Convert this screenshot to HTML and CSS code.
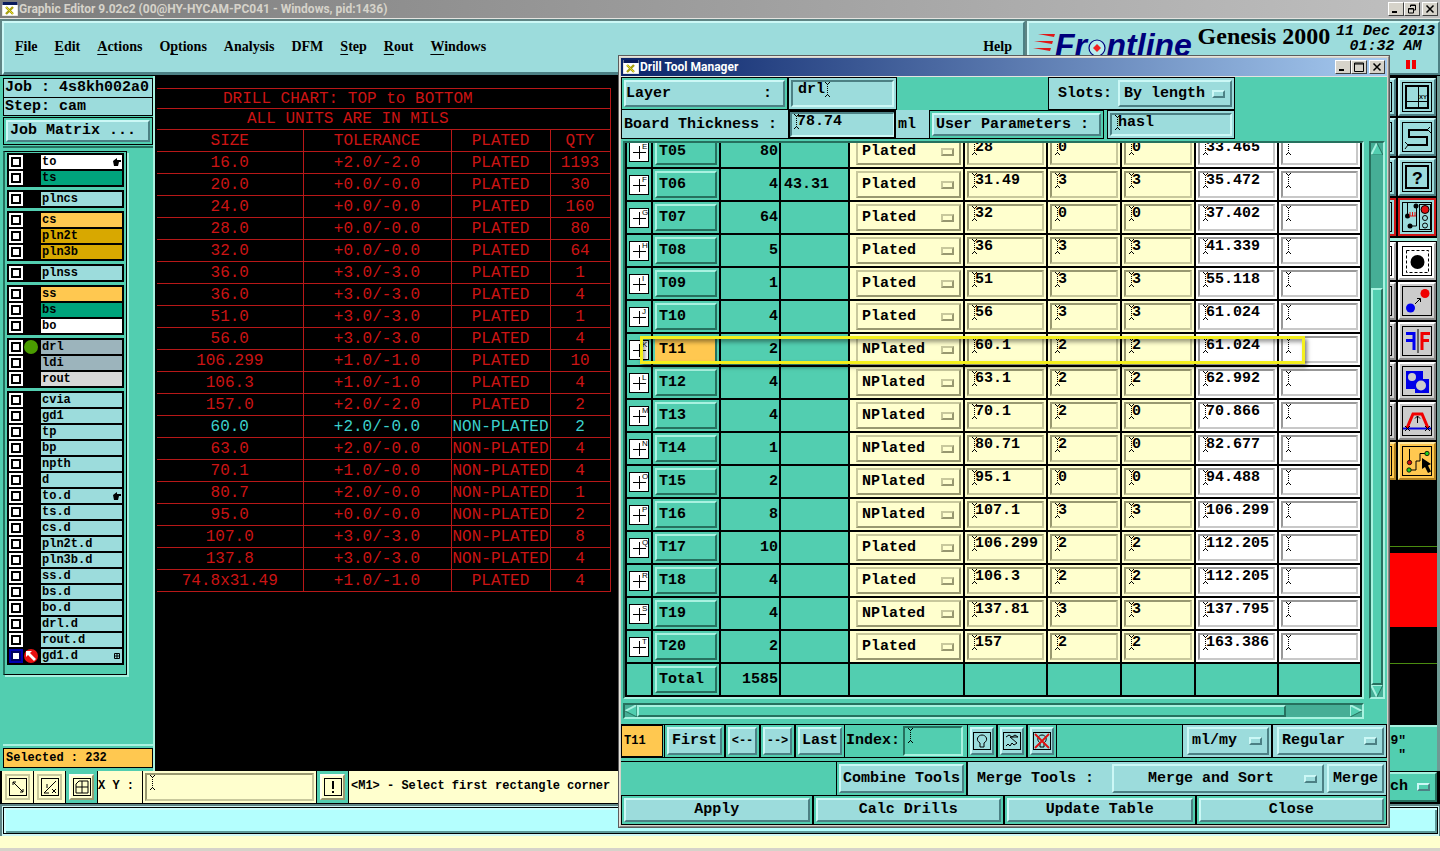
FILE: index.html
```html
<!DOCTYPE html>
<html lang="en">
<head>
<meta charset="utf-8">
<title>Graphic Editor</title>
<link rel="stylesheet" href="styles.css">
</head>
<body>
<svg class="defs" aria-hidden="true">
  <symbol id="app" viewBox="0 0 16 14"><rect width="16" height="14" fill="#fff"/><rect width="16" height="3" fill="#0a1a5c"/><path d="M0 0V14H16V0" fill="none" stroke="#cfcdc4"/><path d="M4 5l7 7M11 5l-7 7" stroke="#a8a010" stroke-width="2.4"/><path d="M4 5l7 7" stroke="#e8dc30"/></symbol>
  <symbol id="caret" viewBox="0 0 5 15"><path d="M0 .5h1M4 .5h1M1 1.5h1M3 1.5h1M0 14.5h1M4 14.5h1M1 13.5h1M3 13.5h1" stroke="#000"/><path d="M2.500 2v11" stroke="#000" stroke-dasharray="1 1"/></symbol>
  <symbol id="min" viewBox="0 0 10 10"><path d="M1 8h5" stroke="#000" stroke-width="2"/></symbol>
  <symbol id="max" viewBox="0 0 10 10"><path d="M.5 1h9v8.500h-9zM.5 2h9" fill="none" stroke="#000"/></symbol>
  <symbol id="restore" viewBox="0 0 10 10"><path d="M3.500 3V1h5v5H7M3.500 1.500h5M1.500 4.500h5v4.500h-5zM1.500 5h5" fill="none" stroke="#000"/></symbol>
  <symbol id="close" viewBox="0 0 10 10"><path d="M1.500 1.500l7 7M8.500 1.500l-7 7" stroke="#000" stroke-width="1.500"/></symbol>
</svg>

<div class="app">
  <header class="titlebar">
    <svg class="appicon"><use href="#app"/></svg>
    <span class="wtitle">Graphic Editor 9.02c2 (00@HY-HYCAM-PC041 - Windows, pid:1436)</span>
    <div class="winbtns">
      <button aria-label="Minimize"><svg><use href="#min"/></svg></button><button aria-label="Restore"><svg><use href="#restore"/></svg></button><button class="sep" aria-label="Close"><svg><use href="#close"/></svg></button>
    </div>
  </header>

  <div class="top">
    <nav class="menubar">
      <button><u>F</u>ile</button><button><u>E</u>dit</button><button><u>A</u>ctions</button><button>O<u>p</u>tions</button><button>Analysis</button><button>DFM</button><button><u>S</u>tep</button><button><u>R</u>out</button><button><u>W</u>indows</button><button class="help">Help</button>
    </nav>
    <div class="brand">
      <div class="logo">
        <svg class="streaks" viewBox="0 0 22 24"><path d="M5 0h17l-1 3zM1 7h19l-1 3zM0 14h18l-1 3z" fill="#e01818"/><path d="M3 21h13l-1 2z" fill="#e01818"/></svg>
        <span>Fr<span class="target">o<svg viewBox="0 0 20 20"><circle cx="10" cy="10" r="8" fill="#b8ecec" stroke="#00007c" stroke-width="1.200"/><path d="M10 6l4 4-4 4-4-4z" fill="#f02020"/></svg></span>ntline</span>
      </div>
      <div class="product">Genesis 2000</div>
      <div class="clock"><div>11 Dec 2013</div><div>01:32 AM</div><div class="pause"><i></i><i></i></div></div>
    </div>
  </div>

  <main class="work">
    <aside class="side">
      <div class="info">Job : 4s8kh002a0</div>
      <div class="info">Step: cam</div>
      <div class="slot"><button class="btn left">Job Matrix ...</button></div>
      <div class="layers"><div class="list" id="layers"></div></div>
      <div class="selected">Selected : 232</div>
    </aside>
    <section class="canvas">
      <table class="chart">
        <colgroup><col class="c1"><col class="c2"><col class="c3"><col class="c4"></colgroup>
        <thead>
          <tr class="t1"><td colspan="4">DRILL CHART: TOP to BOTTOM</td></tr>
          <tr class="t2"><td colspan="4">ALL UNITS ARE IN MILS</td></tr>
          <tr><th>SIZE</th><th>TOLERANCE</th><th>PLATED</th><th>QTY</th></tr>
        </thead>
        <tbody id="chart"></tbody>
      </table>
    </section>
    <aside class="right">
      <div class="tools">
        <div class="tile"></div>
        <button class="tile" aria-label="Coordinates"><svg viewBox="0 0 34 34"><rect x="6" y="6" width="22" height="22" class="k2"/><path d="M18.500 7v21M7 21.500h21" class="k1"/><text x="19" y="19" class="xy">XY</text></svg></button>
        <div class="tile"></div>
        <button class="tile" aria-label="Snake"><svg viewBox="0 0 34 34"><path d="M28 10H9v7h18v8H8" class="k2"/><path d="M27 10l3-3M28 10l3 3M8 25l-3-3M8 25l-3 4" class="k1"/></svg></button>
        <div class="tile"></div>
        <button class="tile" aria-label="Help"><svg viewBox="0 0 34 34"><rect x="6" y="6" width="22" height="22" class="k2"/><text x="12" y="24" class="q">?</text></svg></button>
        <div class="tile red"></div>
        <button class="tile red" aria-label="Select state"><svg viewBox="0 0 34 34"><path d="M7.500 3v13M16.500 7v19h-6" class="k1"/><circle cx="16" cy="6" r="2.500"/><circle cx="7.500" cy="16" r="2.500"/><circle cx="10" cy="26" r="2.500"/><path d="M10 12v4M12.500 12v4M15 12v4M9 16h7" stroke="#e01010"/><rect x="19.500" y="4.500" width="11" height="25" class="k1"/><circle cx="25" cy="9.500" r="4" fill="#e01010" stroke="#000"/><circle cx="25" cy="18" r="2.500" class="k1"/><circle cx="25" cy="25.500" r="2.500" class="k1"/></svg></button>
      </div>
      <div class="tools second">
        <div class="tile white"></div>
        <button class="tile white" aria-label="Pad"><svg viewBox="0 0 34 34"><rect x="6.500" y="6.500" width="22" height="22" class="k1" stroke-dasharray="3 2"/><circle cx="17.500" cy="18" r="7"/></svg></button>
        <div class="tile gray"></div>
        <button class="tile gray" aria-label="Move"><svg viewBox="0 0 34 34"><circle cx="10.500" cy="24" r="4.500" fill="#0000f0"/><circle cx="25" cy="9.500" r="4.500" fill="#f00000"/><path d="M15 20l5-5M17 14.500h3.500v3.500" class="k1"/></svg></button>
        <div class="tile gray"></div>
        <button class="tile gray" aria-label="Mirror"><svg viewBox="0 0 34 34"><path d="M6 9.500h8V26M6 16.500h8" fill="none" stroke="#0000f0" stroke-width="3"/><path d="M30 9.500h-8V26M29 16.500h-7" fill="none" stroke="#f00000" stroke-width="3"/><path d="M18 5v24" class="k1"/></svg></button>
        <div class="tile gray"></div>
        <button class="tile gray" aria-label="Copy shape"><svg viewBox="0 0 34 34"><path d="M6 7h17v8h6v14H15v-4H6z" fill="#0000e8"/><circle cx="12" cy="13" r="4" fill="#ccc"/><circle cx="21" cy="21.500" r="5" fill="#ccc"/></svg></button>
        <div class="tile gray"></div>
        <button class="tile gray" aria-label="Stretch"><svg viewBox="0 0 34 34"><path d="M3 24.500h28" stroke="#0000e0" stroke-width="2"/><path d="M7 24l6-14h9l6 14" fill="none" stroke="#f00000" stroke-width="3"/><path d="M17.500 19v-7M15 14.500l2.500-2.500 2.500 2.500M5 22l5 5M10 22l-5 5M25 22l5 5M30 22l-5 5" class="k1"/></svg></button>
        <div class="tile orange"></div>
        <button class="tile orange" aria-label="Route net"><svg viewBox="0 0 34 34"><path d="M9.500 5v14M9 26h7v-9h4V9.500h7" class="k1"/><circle cx="9.500" cy="18.500" r="2.200" fill="#d01010" stroke="#000" stroke-width=".8"/><circle cx="9" cy="26" r="2.200" fill="#20d020" stroke="#000" stroke-width=".8"/><circle cx="27" cy="9.500" r="2.200" fill="#20d020" stroke="#000" stroke-width=".8"/><path d="M22 14l9 6-3 1.500 3 6-3 1.500-3-6-3 2z"/></svg></button>
      </div>
      <div class="minimap"><div class="redblock"></div></div>
      <div class="coords"><div>9"</div><div>"</div></div>
    </aside>
  </main>

  <div class="status">
    <div class="cell flat"><button class="ic" aria-label="Zoom line"><svg viewBox="0 0 18 18"><rect x=".5" y=".5" width="17" height="17" class="k1"/><path d="M4 4l10 10M4 7V4h3M11 14h3v-3" class="k1"/></svg></button></div>
    <div class="cell flat"><button class="ic" aria-label="Angle"><svg viewBox="0 0 18 18"><rect x=".5" y=".5" width="17" height="17" class="k1"/><path d="M15 3L3 15M3 15h5M6 6v4M11 11l4 4M15 11l-4 4" class="k1"/></svg></button></div>
    <div class="cell"><button class="ic" aria-label="Grid"><svg viewBox="0 0 18 18"><rect x=".5" y=".5" width="17" height="17" class="k1"/><path d="M3 6l3-3h9v12H3zM9 3v12M3 9h12" class="k1"/></svg></button></div>
    <label class="xylabel" for="xy">X Y :</label>
    <div class="cell flat xybox"><div class="fld"><svg class="caret"><use href="#caret"/></svg><input id="xy"></div></div>
    <div class="cell"><button class="ic" aria-label="Alert"><svg viewBox="0 0 18 18"><rect x=".5" y=".5" width="17" height="17" class="k1"/><path d="M9 3v8M9 13v2" class="k2"/></svg></button></div>
    <div class="prompt">&lt;M1&gt; - Select first rectangle corner</div>
    <label class="unit"><span class="opt up"><select aria-label="Units"><option>Inch</option></select><i class="bar"></i></span></label>
  </div>
  <div class="message"><div></div></div>
  <div class="foot"></div>
</div>

<section class="dialog" aria-label="Drill Tool Manager">
  <header class="titlebar">
    <svg class="appicon"><use href="#app"/></svg>
    <span class="wtitle">Drill Tool Manager</span>
    <div class="winbtns">
      <button aria-label="Minimize"><svg><use href="#min"/></svg></button><button aria-label="Maximize"><svg><use href="#max"/></svg></button><button class="sep" aria-label="Close"><svg><use href="#close"/></svg></button>
    </div>
  </header>
  <div class="client">
    <div class="row r1">
      <div class="slot w166"><button class="btn spread"><span>Layer</span><span>:</span></button></div>
      <div class="slot aqua w108"><div class="fld aqua"><input class="indent" aria-label="Layer" value="drl" size="3"><svg class="caret"><use href="#caret"/></svg></div></div>
      <div class="push150"></div>
      <div class="slot aqua w187"><label for="slots">Slots:</label><span class="opt up"><select id="slots"><option>By length</option></select><i class="bar"></i></span></div>
    </div>
    <div class="row r2">
      <label class="blabel w166" for="bt">Board Thickness :</label>
      <div class="fld aqua focus"><svg class="caret"><use href="#caret"/></svg><input id="bt" value="78.74"></div>
      <span class="ml">ml</span>
      <div class="slot w174"><button class="btn left">User Parameters :</button></div>
      <div class="gap3"></div>
      <div class="slot aqua w128"><div class="fld aqua"><svg class="caret"><use href="#caret"/></svg><input aria-label="User parameters" value="hasl"></div></div>
    </div>

    <div class="scroller">
      <div class="view">
        <table class="drills">
          <colgroup><col class="d0"><col class="d1"><col class="d2"><col class="d3"><col class="d4"><col class="d5"><col class="d6"><col class="d6"><col class="d5"><col class="d5"></colgroup>
          <tbody id="drills"></tbody>
        </table>
        <div class="mark"></div>
      </div>
      <div class="vbar"><svg viewBox="0 0 12 12"><path d="M0 12L6 0l6 12z" fill="#52ceb0"/><path d="M0 12L6 0" stroke="#a8f2e0" stroke-width="2"/><path d="M6 0l6 12H0" fill="none" stroke="#26705e"/></svg><div class="trough"><div class="thumb"></div></div><svg viewBox="0 0 12 12"><path d="M0 0h12L6 12z" fill="#52ceb0"/><path d="M12 0H0l6 12" fill="none" stroke="#a8f2e0" stroke-width="2"/><path d="M6 12l6-12" stroke="#26705e"/></svg></div>
      <div class="hbar"><svg viewBox="0 0 12 12"><path d="M12 0L0 6l12 6z" fill="#52ceb0"/><path d="M12 0L0 6" stroke="#a8f2e0" stroke-width="2"/><path d="M0 6l12 6V0" fill="none" stroke="#26705e"/></svg><div class="trough"><div class="thumb"></div></div><svg viewBox="0 0 12 12"><path d="M0 0l12 6-12 6z" fill="#52ceb0"/><path d="M12 6L0 0v12" fill="none" stroke="#a8f2e0" stroke-width="2"/><path d="M0 12l12-6" stroke="#26705e"/></svg></div>
    </div>

    <div class="row r3">
      <div class="slot cur">T11</div>
      <div class="slot w60"><button class="btn">First</button></div>
      <div class="slot w36"><button class="btn small">&lt;--</button></div>
      <div class="slot w36"><button class="btn small">--&gt;</button></div>
      <div class="slot w50"><button class="btn">Last</button></div>
      <label class="idx" for="idx">Index:</label>
      <div class="fld teal"><svg class="caret"><use href="#caret"/></svg><input id="idx"></div>
      <div class="slot w30"><button class="btn" aria-label="Highlight"><svg viewBox="0 0 18 18"><rect x=".5" y=".5" width="17" height="17" class="k1"/><path d="M7 11c-5-3-2-8 2-8s7 5 2 8v4H7z" class="k1"/></svg></button></div>
      <div class="slot w30"><button class="btn" aria-label="Rout"><svg viewBox="0 0 18 18"><rect x=".5" y=".5" width="17" height="17" class="k1"/><path d="M3 5l3-2 3 2 3-2 3 2H7l7 6-3 2-2-2-2 3-2-2-2 2" class="k1"/></svg></button></div>
      <div class="slot w30"><button class="btn" aria-label="Clear"><svg viewBox="0 0 18 18"><rect x=".5" y=".5" width="17" height="17" class="k1"/><path d="M7 11c-4-3-2-8 2-8s6 5 2 8v4H7z" class="k1"/><path d="M2 2l14 14M16 2L2 16" stroke="#e01010" stroke-width="1.800"/></svg></button></div>
      <div class="grow"></div>
      <div class="slot aqua w90 inset"><span class="opt up"><select aria-label="Unit"><option>ml/my</option></select><i class="bar"></i></span></div>
      <div class="slot aqua w114 inset"><span class="opt up"><select aria-label="View"><option>Regular</option></select><i class="bar"></i></span></div>
    </div>
    <div class="row r4">
      <div class="grow"></div>
      <div class="slot w130"><button class="btn">Combine Tools</button></div>
      <div class="slot aqua merge"><label for="mt">Merge Tools :</label><span class="opt up center"><select id="mt"><option>Merge and Sort</option></select><i class="bar"></i></span><button class="btn">Merge</button></div>
    </div>
    <div class="row r5">
      <div class="slot"><button class="btn">Apply</button></div>
      <div class="slot"><button class="btn">Calc Drills</button></div>
      <div class="slot"><button class="btn">Update Table</button></div>
      <div class="slot"><button class="btn">Close</button></div>
    </div>
  </div>
</section>
<script src="app.js"></script>
</body>
</html>
```
FILE: styles.css
```css
:root {
  --teal: #52ceb0;
  --teal-hi: #a8f2e0;
  --teal-lo: #26705e;
  --aqua: #9cdcdc;
  --aqua-hi: #ccf8f6;
  --aqua-lo: #4c8084;
  --cream: #ffffce;
  --cream-hi: #c8c89c;
  --cream-lo: #989870;
  --orange: #ffc850;
  --frame: #d6d3ca;
  --mono: "Liberation Mono", "Courier New", monospace;
}
* { box-sizing: border-box; }
body { margin: 0; background: #000; color: #000; font: bold 15px/18px var(--mono); overflow: hidden; }
.defs { position: absolute; width: 0; height: 0; }
button, input, select { font: inherit; color: inherit; margin: 0; padding: 0; border: 0; background: none; border-radius: 0; }
select { appearance: none; min-width: 0; outline: 0; }
input { outline: 0; min-width: 0; }
svg { display: block; flex: none; }
.k1 { fill: none; stroke: #000; stroke-width: 1; }
.k2 { fill: none; stroke: #000; stroke-width: 2; }
.grow { flex: 1; }

.app { display: grid; grid-template-rows: 19px 57px 1fr 33px 32px 15px; min-height: 100vh; }

/* window title bars */
.titlebar { display: flex; align-items: center; background: linear-gradient(90deg, #7c7c7c, #c0c0c0); color: #d6d3ca; font: bold 12px/18px Roboto, sans-serif; border-bottom: 1px solid #e4e4e0; }
.appicon { width: 16px; height: 14px; margin: 0 1px 0 2px; }
.wtitle { flex: 1; white-space: nowrap; }
.winbtns { display: flex; padding-right: 2px; }
.winbtns button { width: 16px; height: 14px; background: var(--frame); border: 1px solid; border-color: #fff #404040 #404040 #fff; display: flex; align-items: center; justify-content: center; }
.winbtns svg { width: 10px; height: 10px; }
.winbtns .sep { margin-left: 2px; }

/* menu and brand */
.top { display: flex; gap: 2px; background: #5f8484; padding: 2px 0 0 2px; border-bottom: 1px solid #000; min-width: 0; }
.menubar { flex: 1; display: flex; align-items: center; background: var(--aqua); border: 2px solid; border-color: var(--aqua-hi) var(--aqua-lo) var(--aqua-lo) var(--aqua-hi); box-shadow: inset 0 -1px var(--aqua-lo); padding: 0 11px 2px; gap: 17px; font: bold 14px/20px "Liberation Serif", serif; }
.menubar button { white-space: nowrap; }
.menubar u { text-underline-offset: 3px; text-decoration-thickness: 1px; }
.menubar .help { margin-left: auto; }
.brand { width: 413px; background: var(--aqua); border: 2px solid; border-color: var(--aqua-hi) var(--aqua-lo) var(--aqua-lo) var(--aqua-hi); display: flex; justify-content: space-between; }
.logo { display: flex; padding: 5px 0 0 4px; color: #00007c; font: italic bold 32px/34px "Liberation Sans", sans-serif; }
.streaks { width: 22px; height: 24px; margin-top: 6px; }
.target { position: relative; color: transparent; }
.target svg { position: absolute; left: 0; top: 11px; width: 20px; height: 20px; }
.product { font: bold 24px/26px "Liberation Serif", serif; white-space: nowrap; }
.clock { font-style: italic; font-size: 15px; line-height: 15px; text-align: center; padding: 1px 3px 0 0; white-space: nowrap; }
.pause { display: flex; justify-content: flex-end; gap: 2px; padding: 6px 19px 0 0; }
.pause i { width: 4px; height: 9px; background: #f00000; }

/* bevels */
.slot { border: 1px solid #000; background: var(--teal); display: flex; padding: 2px; min-width: 0; }
.slot.aqua { background: var(--aqua); }
.btn { flex: 1; background: var(--aqua); border: 2px solid; border-color: var(--aqua-hi) var(--aqua-lo) var(--aqua-lo) var(--aqua-hi); text-align: center; white-space: nowrap; display: flex; align-items: center; justify-content: center; }
.btn svg { width: 18px; height: 18px; }
.btn.left { justify-content: flex-start; padding-left: 2px; }
.btn.spread { justify-content: space-between; padding: 0 11px 0 0; }
.btn.small { font-size: 12px; }
.up { background: var(--aqua); border: 2px solid; border-color: var(--aqua-hi) var(--aqua-lo) var(--aqua-lo) var(--aqua-hi); }
.opt { flex: 1; display: flex; align-items: center; padding: 0 5px 0 4px; min-width: 0; }
.opt select { flex: 1; }
.opt.center select { text-align: center; text-align-last: center; }
.bar { flex: none; width: 13px; height: 8px; border: 2px solid; border-color: var(--aqua-hi) var(--aqua-lo) var(--aqua-lo) var(--aqua-hi); background: var(--aqua); }
.fld { flex: 1; display: flex; align-items: flex-start; min-width: 0; padding: 0 0 0 3px; border: 2px solid; border-color: var(--cream-lo) var(--cream-hi) var(--cream-hi) var(--cream-lo); }
.fld input { flex: 1; width: 0; height: 16px; line-height: 16px; }
.fld.aqua { border-color: var(--aqua-lo) var(--aqua-hi) var(--aqua-hi) var(--aqua-lo); }
.fld.teal { border-color: var(--teal-lo) var(--teal-hi) var(--teal-hi) var(--teal-lo); }
.caret { width: 5px; height: 15px; margin: 0 -2px 0 0; }

/* left side */
.work { display: flex; min-height: 0; }
.side { width: 155px; background: var(--teal); border-right: 2px solid var(--teal-hi); padding: 2px 0 3px 3px; display: flex; flex-direction: column; }
.side .slot { margin: 1px 0; height: 28px; }
.info { border: 1px solid #000; background: var(--aqua); height: 20px; line-height: 18px; padding-left: 1px; white-space: nowrap; }
.info + .info { border-top: 0; height: 18px; }
.layers { flex: 1; border-top: 2px solid var(--teal-lo); padding-top: 3px; margin-bottom: 2px; border-bottom: 2px solid var(--teal-hi); min-height: 0; }
.list { width: 124px; border: 1px solid #000; border-left: 2px solid var(--teal-lo); box-shadow: 2px 2px var(--teal-hi); padding: 1px 2px 9px 2px; display: flex; flex-direction: column; gap: 3px; }
.group { background: #000; padding: 2px 2px 0; }
.layer { display: grid; grid-template-columns: 14px 16px 1fr; gap: 1px; height: 16px; align-items: start; font-size: 12px; line-height: 14px; }
.tick { appearance: none; width: 14px; height: 14px; background: #fff; border: 2px solid #fff; outline: 0; box-shadow: inset 0 0 0 2px #000; }
.tick:checked { border-color: #0000b0; box-shadow: inset 0 0 0 2px #000060; }
.layer .name { height: 14px; padding: 0 1px; display: flex; justify-content: space-between; align-items: center; background: var(--aqua); text-align: left; }
.name svg { width: 8px; height: 8px; }
.dot { width: 14px; height: 14px; border-radius: 50%; background: #4a9c00; }
.state svg { width: 14px; height: 14px; }
.selected { border: 1px solid #000; background: var(--orange); height: 20px; font-size: 12px; line-height: 18px; padding-left: 2px; }

/* drill chart */
.canvas { flex: 1; background: #000; padding: 12px 0 0 2px; min-width: 0; }
.chart { border-collapse: collapse; table-layout: fixed; width: 453px; color: #cc1414; font: 16px/20px var(--mono); }
.chart th { font-weight: normal; }
.chart td, .chart th { padding: 0; height: 22px; border: 1px solid #b81818; border-left: 0; text-align: center; white-space: nowrap; }
.chart tr.t1 td { text-align: left; padding-left: 66px; height: 20px; line-height: 18px; }
.chart tr.t2 td { text-align: left; padding-left: 90px; height: 21px; line-height: 18px; }
.chart .hit td { color: #3cd0cc; }
.c1 { width: 146px; } .c2 { width: 148px; } .c3 { width: 99px; } .c4 { width: 60px; }

/* right side */
.right { width: 82px; display: flex; flex-direction: column; background: var(--teal); border-right: 3px solid #6f9a94; }
.tools { display: grid; grid-template-columns: 38px 38px; gap: 2px; background: #000; padding: 2px 0; }
.tools.second { border-top: 3px solid var(--teal-hi); padding-top: 1px; }
.tile { width: 38px; height: 38px; background: var(--aqua); border: 2px solid; border-color: var(--aqua-hi) var(--aqua-lo) var(--aqua-lo) var(--aqua-hi); display: grid; }
.tile::before { content: ""; grid-area: 1 / 1; margin: 2px; border: 1px solid #000; }
.tile svg { grid-area: 1 / 1; width: 34px; height: 34px; }
.tile.red { border-color: #d01818; }
.tile.white { background: #fff; border-color: #fff #aaa #aaa #fff; }
.tile.gray { background: #ccc; border-color: #fff #888 #888 #fff; }
.tile.orange { background: var(--orange); border-color: #ffe8a0 #b08020 #b08020 #ffe8a0; }
.xy { font: bold 6px "Liberation Sans", sans-serif; }
.q { font: bold 18px "Liberation Mono", monospace; }
.minimap { flex: 1; background: #000; display: flex; flex-direction: column; justify-content: center; padding-top: 2px; }
.redblock { height: 118px; border: solid #4a8c10; border-width: 1px 0; padding: 6px 0 36px; background: #f00 content-box; }
.coords { height: 46px; border-top: 2px solid var(--teal-hi); padding: 7px 31px 0 0; font-size: 13px; line-height: 14px; text-align: right; }

/* bottom strips */
.status { display: flex; background: #000; border-bottom: 1px solid #000; padding-left: 2px; gap: 1px; min-width: 0; }
.cell { width: 31px; background: var(--teal); padding: 3px; display: flex; }
.cell.flat { background: var(--cream); }
.cell.flat .ic { border-color: var(--cream-hi); }
.ic { flex: 1; background: var(--cream); border: 2px solid; border-color: #fffff0 var(--cream-lo) var(--cream-lo) #fffff0; display: flex; align-items: center; justify-content: center; }
.ic svg { width: 18px; height: 18px; }
.xylabel { width: 44px; background: var(--cream); font-size: 12px; line-height: 31px; white-space: nowrap; }
.cell.xybox { width: 173px; padding: 2px; }
.prompt { flex: 1; background: var(--cream); font-size: 12px; line-height: 31px; padding-left: 2px; white-space: nowrap; }
.unit { width: 82px; display: flex; background: #000; padding: 1px 3px 1px 0; }
.unit .up { background: var(--teal); border-color: var(--teal-hi) var(--teal-lo) var(--teal-lo) var(--teal-hi); }
.unit select { text-align: right; text-align-last: right; padding-right: 9px; }
.unit .bar { background: var(--teal); }
.message { background: #d0f6f4; border: solid #5f8484; border-width: 2px 1px 0 2px; padding: 1px 1px 2px; display: flex; }
.message div { flex: 1; background: #b4fffe; border: 1px solid #000; box-shadow: inset 2px 2px #d0fffe, inset -2px -2px #5c9898; }
.foot { background: var(--cream); border-bottom: 3px solid #d6d3ca; }

/* drill tool manager window */
.dialog { position: absolute; left: 618px; right: 50px; top: 55px; height: 773px; display: flex; flex-direction: column; border: 2px solid; border-color: #e6e4dc #8a8a88 #8a8a88 #e6e4dc; outline: 1px solid #5c5c5c; outline-offset: -1px; background: var(--frame); padding: 1px; }
.dialog .titlebar { height: 19px; background: linear-gradient(90deg, #0a246a, #a6caf0); color: #fff; }
.client { flex: 1; min-height: 0; background: var(--teal); display: flex; flex-direction: column; }
.row { display: flex; flex: none; }
.r1 { height: 33px; }
.r2 { height: 29px; }
.w166 { width: 167px; }
.w108 { width: 109px; }
.push150 { width: 151px; }
.w187 { width: 187px; }
.w174 { width: 175px; }
.gap3 { width: 3px; }
.w128 { width: 128px; }
.r1 label { padding: 0 6px 0 7px; line-height: 28px; }
.fld .indent { flex: none; width: 29px; padding-left: 2px; }
.blabel { background: var(--aqua); border: solid #000; border-width: 0 0 1px 1px; padding-left: 2px; line-height: 29px; white-space: nowrap; }
.fld.focus { flex: none; width: 108px; background: var(--aqua); outline: 2px solid #000; outline-offset: -2px; border-width: 4px 3px 4px 4px; padding-left: 2px; }
.ml { width: 33px; background: var(--aqua); border-bottom: 1px solid #000; padding-left: 2px; line-height: 29px; }

.scroller { flex: 1; min-height: 0; display: grid; grid-template-columns: 1fr 16px; grid-template-rows: 1fr 16px; gap: 4px 5px; padding: 2px 2px 5px 2px; }
.view { position: relative; overflow: hidden; display: flex; flex-direction: column; justify-content: flex-end; border: 2px solid; border-color: var(--teal-lo) var(--teal-hi) var(--teal-hi) var(--teal-lo); min-height: 0; }
.drills { border-collapse: collapse; table-layout: fixed; width: 100%; flex: none; }
.drills td { border: 2px solid #000; padding: 2px; height: 33px; background: var(--teal); overflow: hidden; white-space: nowrap; }
.drills .num { text-align: right; padding-right: 1px; }
.drills .txt { padding-left: 3px; }
.drills td.cream { background: var(--cream); }
.drills td.white { background: #fff; }
.drills .fld { height: 27px; }
.drills .white .fld { border-color: #989898 #c8c8c8 #c8c8c8 #989898; }
.drills .opt { height: 27px; margin-left: 4px; border: 2px solid; border-color: var(--cream-hi) var(--cream-lo) var(--cream-lo) var(--cream-hi); }
.drills .bar { border-color: var(--cream-hi) var(--cream-lo) var(--cream-lo) var(--cream-hi); background: var(--cream); }
.tool { width: 100%; height: 27px; background: var(--teal); border: 2px solid; border-color: var(--teal-hi) var(--teal-lo) var(--teal-lo) var(--teal-hi); text-align: left; padding-left: 2px; display: block; }
.tool.on { background: var(--orange); border-color: var(--orange); border-right-color: var(--teal-lo); }
.sym { width: 20px; height: 20px; }
.sym text { font: 8px "Liberation Sans", sans-serif; }
.d0 { width: 26px; } .d1 { width: 68px; } .d2 { width: 60px; } .d3 { width: 69px; } .d4 { width: 115px; } .d5 { width: 83px; } .d6 { width: 74px; }
.mark { position: absolute; left: 15px; top: 193px; width: 665px; height: 28px; border: 3px solid #f4f01c; box-shadow: 2px 3px 4px rgba(0, 0, 0, .5), inset 2px 3px 4px rgba(0, 0, 0, .4); }
.vbar, .hbar { display: flex; border: 2px solid; border-color: var(--teal-lo) var(--teal-hi) var(--teal-hi) var(--teal-lo); background: #46ae96; min-width: 0; min-height: 0; }
.vbar { flex-direction: column; }
.vbar svg, .hbar svg { width: 12px; height: 12px; }
.trough { flex: 1; display: flex; }
.thumb { background: var(--teal); border: 2px solid; border-color: var(--teal-hi) var(--teal-lo) var(--teal-lo) var(--teal-hi); }
.vbar .trough { align-items: flex-end; }
.vbar .thumb { width: 100%; height: 75%; }
.hbar .thumb { width: 91%; }

.r3 { height: 34px; margin-bottom: 3px; border-bottom: 1px solid #000; border-top: 1px solid #000; }
.r3 .slot { border-width: 0 1px 0 1px; }
.r3 .inset { padding-left: 4px; }
.r3 .inset .opt { padding-left: 3px; }
.cur { width: 42px; background: var(--orange); font-size: 12px; align-items: center; margin-right: 1px; }
.r3 .cur { border-width: 1px; }
.w60 { width: 61px; } .w36 { width: 35px; } .w50 { width: 50px; } .w30 { width: 30px; } .w90 { width: 90px; } .w114 { width: 115px; }
.idx { padding: 0 3px 0 1px; line-height: 32px; }
.r3 .fld { flex: none; width: 60px; margin: 1px 4px 1px 0; }
.r4 { height: 34px; border-top: 1px solid #000; }
.r4 .slot { border-width: 0 1px; }
.w130 { width: 131px; }
.merge { width: 420px; gap: 3px; }
.merge label { line-height: 29px; padding: 0 15px 0 7px; }
.merge .btn { flex: none; width: 57px; }
.r5 { height: 30px; }
.r5 .slot { flex: 1; }
```
FILE: app.js
```javascript
const hand = '<svg viewBox="0 0 8 8"><path d="M0 3l4-3v2h4v2H6l-1 4H1z"/></svg>';
const grid = '<svg viewBox="0 0 8 8"><path d="M1.500 1.500h5v5h-5zM4 1v6M1 4h6" fill="none" stroke="#000"/></svg>';
const groups = [
  [['to', '#fff', hand], ['ts', '#00a47c']],
  [['plncs']],
  [['cs', '#ffc850'], ['pln2t', '#d8a800'], ['pln3b', '#d8a800']],
  [['plnss']],
  [['ss', '#ffc850'], ['bs', '#00a47c'], ['bo', '#fff']],
  [['drl', '#9cb4bc'], ['ldi', '#9cb4bc'], ['rout', '#d8d8d8']],
  [['cvia'], ['gd1'], ['tp'], ['bp'], ['npth'], ['d'], ['to.d', '', hand], ['ts.d'], ['cs.d'], ['pln2t.d'],
   ['pln3b.d'], ['ss.d'], ['bs.d'], ['bo.d'], ['drl.d'], ['rout.d'], ['gd1.d', '', grid]],
];
const state = {
  drl: '<div class="dot"></div>',
  'gd1.d': '<svg viewBox="0 0 14 14"><circle cx="7" cy="7" r="7" fill="#e81010"/><path d="M2 2h6L6 4l6 6-2 2-6-6-2 2z" fill="#fff"/></svg>',
};
document.getElementById('layers').innerHTML = groups.map(g =>
  '<div class="group">' + g.map(([n, c, icon]) =>
    `<div class="layer"><input type="checkbox" class="tick" aria-label="${n}"${n === 'gd1.d' ? ' checked' : ''}>` +
    `<div class="state">${state[n] || ''}</div>` +
    `<button class="name"${c ? ` style="background:${c}"` : ''}><span>${n}</span>${icon || ''}</button></div>`).join('') +
  '</div>').join('');

const chart = `16.0 2 P 1193|20.0 0 P 30|24.0 0 P 160|28.0 0 P 80|32.0 0 P 64|36.0 3 P 1|36.0 3 P 4|51.0 3 P 1|56.0 3 P 4|106.299 1 P 10|106.3 1 P 4|157.0 2 P 2|60.0 +2.0/-0.0 N 2|63.0 +2.0/-0.0 N 4|70.1 +1.0/-0.0 N 4|80.7 +2.0/-0.0 N 1|95.0 0 N 2|107.0 3 N 8|137.8 3 N 4|74.8x31.49 1 P 4`;
document.getElementById('chart').innerHTML = chart.split('|').map(line => {
  const [size, tol, p, qty] = line.split(' ');
  const t = tol.length === 1 ? `+${tol}.0/-${tol}.0` : tol;
  return `<tr${size === '60.0' ? ' class="hit"' : ''}><td>${size}</td><td>${t}</td><td>${p === 'P' ? 'PLATED' : 'NON-PLATED'}</td><td>${qty}</td></tr>`;
}).join('');

const drills = [
  ['T05', 'E', 80, '', 'Plated', '28', 0, 0, '33.465'],
  ['T06', 'F', 4, '43.31', 'Plated', '31.49', 3, 3, '35.472'],
  ['T07', 'G', 64, '', 'Plated', '32', 0, 0, '37.402'],
  ['T08', 'H', 5, '', 'Plated', '36', 3, 3, '41.339'],
  ['T09', 'I', 1, '', 'Plated', '51', 3, 3, '55.118'],
  ['T10', 'J', 4, '', 'Plated', '56', 3, 3, '61.024'],
  ['T11', 'K', 2, '', 'NPlated', '60.1', 2, 2, '61.024'],
  ['T12', 'L', 4, '', 'NPlated', '63.1', 2, 2, '62.992'],
  ['T13', 'M', 4, '', 'NPlated', '70.1', 2, 0, '70.866'],
  ['T14', 'N', 1, '', 'NPlated', '80.71', 2, 0, '82.677'],
  ['T15', 'O', 2, '', 'NPlated', '95.1', 0, 0, '94.488'],
  ['T16', 'P', 8, '', 'NPlated', '107.1', 3, 3, '106.299'],
  ['T17', 'Q', 10, '', 'Plated', '106.299', 2, 2, '112.205'],
  ['T18', 'R', 4, '', 'Plated', '106.3', 2, 2, '112.205'],
  ['T19', 'S', 4, '', 'NPlated', '137.81', 3, 3, '137.795'],
  ['T20', 'T', 2, '', 'Plated', '157', 2, 2, '163.386'],
];
const field = (v, label) => `<div class="fld"><svg class="caret"><use href="#caret"/></svg><input aria-label="${label}" value="${v}"></div>`;
document.getElementById('drills').innerHTML = drills.map(([t, s, n, slot, type, size, a, b, bit]) =>
  `<tr><td><svg class="sym" viewBox="0 0 20 20"><rect x=".5" y=".5" width="19" height="19" fill="#fff" stroke="#000"/><path d="M4 10.500h13M10.500 4v13" stroke="#000"/><text x="13" y="7">${s}</text></svg></td>` +
  `<td><button class="tool${t === 'T11' ? ' on' : ''}">${t}</button></td><td class="num">${n}</td><td class="txt">${slot}</td>` +
  `<td class="cream"><span class="opt"><select aria-label="${t} type"><option>${type}</option></select><i class="bar"></i></span></td>` +
  `<td class="cream">${field(size, t + ' finish size')}</td><td class="cream">${field(a, t + ' plus tolerance')}</td><td class="cream">${field(b, t + ' minus tolerance')}</td>` +
  `<td class="white">${field(bit, t + ' drill size')}</td><td class="white">${field('', t + ' bit')}</td></tr>`).join('') +
  '<tr><td></td><td><button class="tool">Total</button></td><td class="num">1585</td><td></td><td></td><td></td><td></td><td></td><td></td><td></td></tr>';
```
